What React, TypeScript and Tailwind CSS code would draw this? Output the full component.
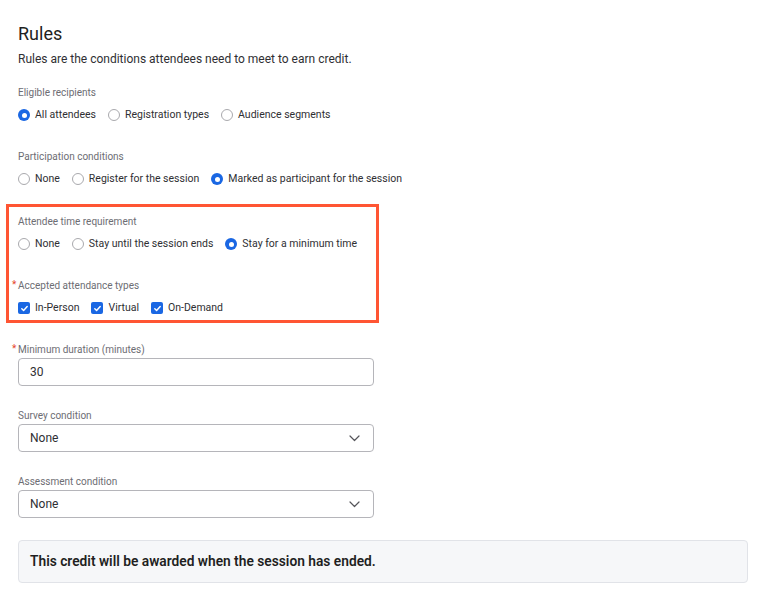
import React from "react";

const font = { fontFamily: "Roboto, 'Noto Sans', sans-serif" };

function Radio({ label, checked }: { label: string; checked?: boolean }) {
  return (
    <label className="flex items-center gap-[5px] whitespace-nowrap text-[10.5px] text-[#2f2f33]">
      {checked ? (
        <span className="flex h-[12px] w-[12px] shrink-0 items-center justify-center rounded-full bg-[#1a67e3]">
          <span className="h-[5px] w-[5px] rounded-full bg-white" />
        </span>
      ) : (
        <span className="h-[12px] w-[12px] shrink-0 rounded-full border border-[#a9a9ad] bg-white" />
      )}
      {label}
    </label>
  );
}

function Check({ label }: { label: string }) {
  return (
    <label className="flex items-center gap-[5px] whitespace-nowrap text-[10.5px] text-[#2f2f33]">
      <span className="flex h-[12px] w-[12px] shrink-0 items-center justify-center rounded-[2px] bg-[#1a67e3]">
        <svg width="9" height="9" viewBox="0 0 10 10" fill="none">
          <path d="M2 5.2l2 2 4-4.4" stroke="white" strokeWidth="1.6" strokeLinecap="round" strokeLinejoin="round" />
        </svg>
      </span>
      {label}
    </label>
  );
}

function Label({ text, required }: { text: string; required?: boolean }) {
  return (
    <div className="relative text-[10px] leading-[12px] text-[#6d6d73]">
      {required ? <span className="absolute -left-[6px] top-[-1px] text-[#e5452b]">*</span> : null}
      {text}
    </div>
  );
}

function Row({ children }: { children: React.ReactNode }) {
  return <div className="mt-[9px] flex h-[14px] items-center gap-[12px]">{children}</div>;
}

function Select({ value }: { value: string }) {
  return (
    <div className="mt-[2px] flex h-[28px] w-[356px] items-center justify-between rounded-[4px] border border-[#b5b5ba] px-[11px] text-[12px] text-[#2f2f33]">
      <span>{value}</span>
      <svg width="11" height="7" viewBox="0 0 11 7" fill="none" className="mr-[2px]">
        <path d="M1 1l4.5 4.5L10 1" stroke="#55555a" strokeWidth="1.2" strokeLinecap="round" strokeLinejoin="round" />
      </svg>
    </div>
  );
}

export default function App() {
  return (
    <div className="min-h-[600px] bg-white pl-[18px] pr-[17px] pt-[24px]" style={font}>
      <h2 className="text-[18px] leading-[20px] text-[#1f1f22]">Rules</h2>
      <p className="mt-[8px] text-[12px] leading-[14px] text-[#2f2f33]">
        Rules are the conditions attendees need to meet to earn credit.
      </p>

      <div className="mt-[21px]">
        <Label text="Eligible recipients" />
        <Row>
          <Radio label="All attendees" checked />
          <Radio label="Registration types" />
          <Radio label="Audience segments" />
        </Row>
      </div>

      <div className="mt-[29px]">
        <Label text="Participation conditions" />
        <Row>
          <Radio label="None" />
          <Radio label="Register for the session" />
          <Radio label="Marked as participant for the session" checked />
        </Row>
      </div>

      <div className="-ml-[12px] mt-[18px] w-[373px] border-[3px] border-[#ff5533] pb-[5px] pl-[9px] pt-[9px]">
        <Label text="Attendee time requirement" />
        <Row>
          <Radio label="None" />
          <Radio label="Stay until the session ends" />
          <Radio label="Stay for a minimum time" checked />
        </Row>
        <div className="mt-[29px]">
          <Label text="Accepted attendance types" required />
          <Row>
            <Check label="In-Person" />
            <Check label="Virtual" />
            <Check label="On-Demand" />
          </Row>
        </div>
      </div>

      <div className="mt-[21px]">
        <Label text="Minimum duration (minutes)" required />
        <div className="mt-[2px] flex h-[28px] w-[356px] items-center rounded-[4px] border border-[#b5b5ba] px-[11px] text-[12px] text-[#2f2f33]">
          30
        </div>
      </div>

      <div className="mt-[24px]">
        <Label text="Survey condition" />
        <Select value="None" />
      </div>

      <div className="mt-[24px]">
        <Label text="Assessment condition" />
        <Select value="None" />
      </div>

      <div className="mt-[22px] flex h-[43px] items-center rounded-[4px] border border-[#e1e3e8] bg-[#f6f7f9] px-[11px] text-[13.75px] font-semibold text-[#1f1f22]">
        This credit will be awarded when the session has ended.
      </div>
    </div>
  );
}
